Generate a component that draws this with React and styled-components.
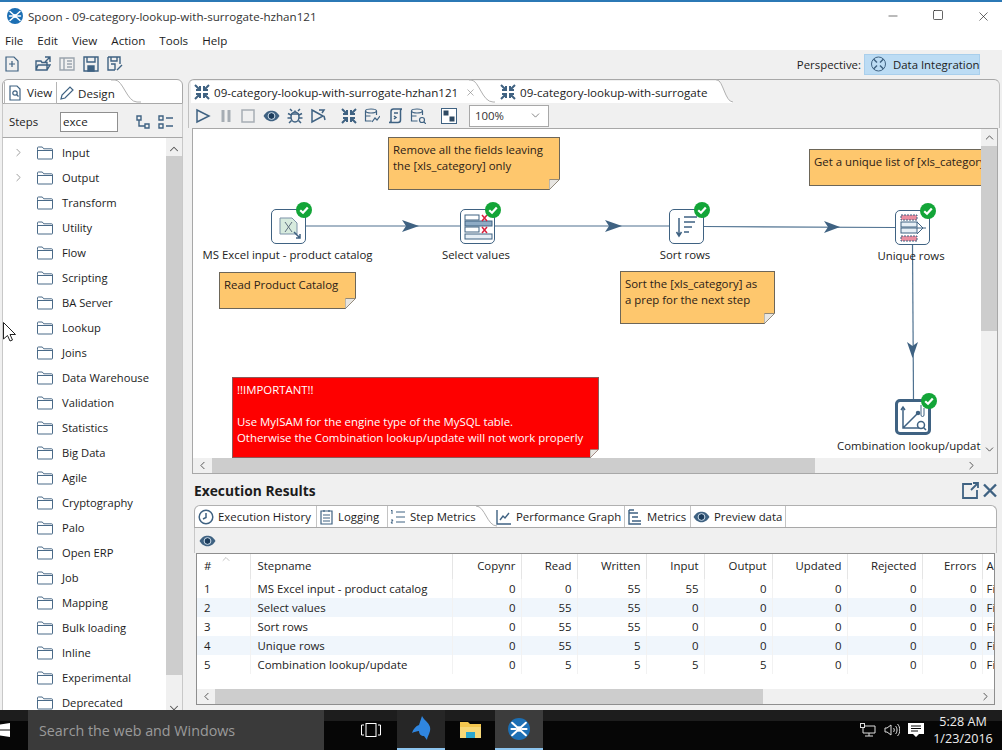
import React from "react";
import styled, { createGlobalStyle } from "styled-components";
import { ChevronRight, ChevronUp, ChevronDown, ChevronLeft, Minus, Square, X } from "lucide-react";

const SLATE = "#3f6282";

const GlobalStyle = createGlobalStyle`
  html, body { margin: 0; padding: 0; background: #f0f0f0; }
  * { box-sizing: border-box; }
  svg { flex: none; }
`;

const Frame = styled.div`
  width: 1002px;
  height: 750px;
  position: relative;
  overflow: hidden;
  display: flex;
  flex-direction: column;
  background: #f0f0f0;
  color: #1c1c1c;
  font-family: "Open Sans", "Noto Sans", sans-serif;
  font-size: 11.4px;
  white-space: nowrap;
`;

/* ---------- window chrome ---------- */

const TitleBar = styled.div`
  height: 32px;
  flex: none;
  display: flex;
  align-items: center;
  background: #fff;
  border-top: 2px solid #2b78b5;
  padding: 0 7px 2px 7px;
  gap: 5px;
`;

const TitleText = styled.div`
  flex: 1;
  font-size: 11.6px;
  color: #333;
`;

const WinButtons = styled.div`
  display: flex;
  gap: 21px;
  color: #111;
`;

const WinButton = styled.div`
  width: 24px;
  display: flex;
  justify-content: center;
`;

const MenuBar = styled.div`
  height: 18px;
  flex: none;
  display: flex;
  align-items: center;
  gap: 14px;
  padding: 0 0 2px 5px;
  background: #fff;
  font-size: 11.6px;
`;

const ToolBar = styled.div`
  height: 28px;
  flex: none;
  display: flex;
  align-items: center;
  padding: 0 22px 0 5px;
`;

const ToolIcons = styled.div`
  flex: 1;
  display: flex;
  align-items: center;
  gap: 8px;
`;

const LeadIcon = styled.span`
  display: flex;
  margin-right: 8px;
`;

const PerspectiveLabel = styled.span`
  margin-right: 3px;
`;

const PerspectiveButton = styled.div`
  width: 116px;
  height: 21px;
  display: flex;
  align-items: center;
  gap: 6px;
  padding-left: 5px;
  background: #bcdcf4;
  border: 1px solid #a9cfec;
`;

const Main = styled.div`
  flex: 1;
  min-height: 0;
  display: flex;
  gap: 5px;
  padding: 1px 2px 0 2px;
`;

/* ---------- left panel ---------- */

const SidePanel = styled.div`
  width: 181px;
  flex: none;
  display: flex;
  flex-direction: column;
  min-height: 0;
`;

const SideTabs = styled.div`
  height: 25px;
  flex: none;
  position: relative;
  display: flex;
  background: #fff;
  border: 1px solid #a8a8a8;
  border-radius: 6px 6px 0 0;
  padding: 2px 0 0 1px;
`;

const SideTab = styled.div`
  height: 22px;
  display: flex;
  align-items: center;
  gap: ${(p) => p.$gap || 3}px;
  padding-left: ${(p) => p.$pad || 3}px;
  width: ${(p) => p.$w}px;
  border-right: ${(p) => (p.$edge ? "1px solid #b5b5b5" : "none")};
  border-left: ${(p) => (p.$edge ? "1px solid #b5b5b5" : "none")};
  border-bottom: ${(p) => (p.$edge ? "1px solid #b5b5b5" : "none")};
  font-size: 11.6px;
`;

const TabCurve = styled.svg`
  position: absolute;
  left: ${(p) => p.$x}px;
  top: -1px;
`;

const StepsRow = styled.div`
  height: 34px;
  flex: none;
  display: flex;
  align-items: center;
  padding: 2px 0 0 6px;
  background: #f0f0f0;
  border-left: 1px solid #c8c8c8;
  border-right: 1px solid #c8c8c8;
  border-bottom: 1px solid #a8a8a8;
`;

const StepsLabel = styled.span`
  width: 51px;
`;

const SearchInput = styled.div`
  width: 58px;
  height: 20px;
  display: flex;
  align-items: center;
  padding-left: 2px;
  background: #fff;
  border: 1px solid #8f8f8f;
  font-size: 11.6px;
`;

const StepsIcons = styled.div`
  display: flex;
  gap: 7px;
  margin-left: 17px;
`;

const SideBody = styled.div`
  flex: 1;
  min-height: 0;
  overflow: hidden;
  display: flex;
  background: #fff;
  border-left: 1px solid #c8c8c8;
  border-right: 1px solid #c8c8c8;
`;

const FolderList = styled.div`
  flex: 1;
  padding-top: 2px;
`;

const FolderRow = styled.div`
  height: 25px;
  display: flex;
  align-items: center;
  font-size: 11.2px;
`;

const Expander = styled.div`
  width: 34px;
  padding-left: 9px;
  color: #808080;
  display: flex;
`;

const FolderName = styled.span`
  margin-left: 9px;
`;

const VScroll = styled.div`
  width: 16px;
  flex: none;
  height: ${(p) => (p.$height ? `${p.$height}px` : "auto")};
  display: flex;
  flex-direction: column;
  align-items: center;
  background: #f0f0f0;
  color: #555;
`;

const VThumb = styled.div`
  width: 100%;
  flex: ${(p) => p.$flex} 0 0;
  background: ${(p) => (p.$track ? "transparent" : "#cdcdcd")};
`;

const ScrollEnd = styled.div`
  height: ${(p) => p.$h || 17}px;
  flex: none;
  display: flex;
  align-items: ${(p) => (p.$low ? "flex-end" : "center")};
  justify-content: center;
`;

/* ---------- right panel ---------- */

const WorkArea = styled.div`
  flex: 1;
  min-width: 0;
  display: flex;
  flex-direction: column;
`;

const EditorTabs = styled.div`
  height: 24px;
  flex: none;
  position: relative;
  display: flex;
  padding: 1px 0 0 2px;
  border-top: 1px solid #a8a8a8;
  border-left: 1px solid #c0c0c0;
  border-right: 1px solid #c0c0c0;
  border-radius: 6px 6px 0 0;
`;

const EditorTab = styled.div`
  height: 22px;
  width: ${(p) => p.$w}px;
  flex: none;
  display: flex;
  align-items: center;
  gap: 4px;
  padding-left: ${(p) => p.$pad}px;
  background: #fff;
  font-size: 11.6px;
`;

const TabClose = styled.span`
  margin-left: 3px;
  display: flex;
  color: #888;
`;

const EditorToolBar = styled.div`
  height: 25px;
  flex: none;
  display: flex;
  align-items: center;
  padding-left: 6px;
  border-left: 1px solid #c0c0c0;
  border-right: 1px solid #c0c0c0;
`;

const ToolGroup = styled.div`
  display: flex;
  align-items: center;
  gap: 7px;
  margin-right: ${(p) => p.$after}px;
`;

const ZoomBox = styled.div`
  width: 80px;
  height: 22px;
  display: flex;
  align-items: center;
  justify-content: space-between;
  padding: 0 6px 0 5px;
  background: #fff;
  border: 1px solid #a8a8a8;
  color: #333;
`;

const CanvasFrame = styled.div`
  height: 346px;
  flex: none;
  display: flex;
  flex-direction: column;
  margin-left: 4px;
  margin-right: 2px;
  background: #fff;
  border: 1px solid #a8a8a8;
`;

const CanvasRow = styled.div`
  flex: 1;
  min-height: 0;
  display: flex;
`;

const Canvas = styled.div`
  flex: 1;
  min-width: 0;
  position: relative;
  overflow: hidden;
  background: #fff;
`;

const HopLayer = styled.svg`
  position: absolute;
  left: 0;
  top: 0;
`;

const Note = styled.div`
  position: absolute;
  left: ${(p) => p.$x}px;
  top: ${(p) => p.$y}px;
  width: ${(p) => p.$w}px;
  height: ${(p) => p.$h}px;
  padding: 4px 4px;
  line-height: 16px;
  white-space: pre;
  background: ${(p) => p.$bg || "#fec76d"};
  border: 1px solid ${(p) => p.$line || "#6d6658"};
  color: ${(p) => p.$fg || "#2b2117"};
`;

const NoteFold = styled.svg`
  position: absolute;
  right: -1px;
  bottom: -1px;
`;

const StepNode = styled.div`
  position: absolute;
  left: ${(p) => p.$x}px;
  top: ${(p) => p.$y}px;
  width: ${(p) => p.$size}px;
  height: ${(p) => p.$size}px;
  display: flex;
  align-items: center;
  justify-content: center;
  background: #fff;
  border: ${(p) => (p.$heavy ? `3px solid ${SLATE}` : `1px solid ${SLATE}`)};
  border-radius: 5px;
`;

const CheckBadge = styled.svg`
  position: absolute;
  right: ${(p) => (p.$heavy ? -10 : -8)}px;
  top: ${(p) => (p.$heavy ? -10 : -9)}px;
`;

const StepLabel = styled.div`
  position: absolute;
  left: ${(p) => p.$x}px;
  top: ${(p) => p.$y}px;
  white-space: nowrap;
  color: #222;
  transform: ${(p) => (p.$left ? "none" : "translateX(-50%)")};
`;

const HScroll = styled.div`
  height: 15px;
  flex: none;
  display: flex;
  align-items: center;
  background: #f0f0f0;
  color: #555;
`;

const HThumb = styled.div`
  height: 100%;
  width: ${(p) => p.$w}px;
  background: #cdcdcd;
  flex: none;
`;

const HEnd = styled.div`
  width: ${(p) => p.$w || 17}px;
  flex: none;
  display: flex;
  justify-content: center;
  margin-left: ${(p) => (p.$push ? "auto" : 0)};
`;

const Results = styled.div`
  flex: 1;
  min-height: 0;
  display: flex;
  flex-direction: column;
  padding: 0 2px 0 4px;
`;

const ResultsHead = styled.div`
  height: 31px;
  flex: none;
  display: flex;
  align-items: center;
  justify-content: space-between;
  padding-left: 2px;
  padding-top: 1px;
`;

const ResultsTitle = styled.div`
  font-weight: 700;
  font-size: 13.8px;
  color: #1c1c1c;
`;

const HeadIcons = styled.div`
  display: flex;
  gap: 4px;
  margin-right: 1px;
`;

const ResultTabs = styled.div`
  height: 23px;
  flex: none;
  position: relative;
  display: flex;
  align-items: flex-end;
  background: #fff;
  border: 1px solid #b0b0b0;
  border-bottom: 1px solid #a8a8a8;
  border-radius: 6px 6px 0 0;
  margin-left: 2px;
  margin-right: 1px;
  padding-left: 1px;
`;

const ResultTab = styled.div`
  height: 21px;
  width: ${(p) => p.$w}px;
  flex: none;
  display: flex;
  align-items: center;
  gap: 4px;
  padding-left: 2px;
  border-right: ${(p) => (p.$plain ? "none" : "1px solid #c4c4c4")};
`;

const TabGap = styled.span`
  width: 14px;
  flex: none;
`;

const ResultTools = styled.div`
  height: 25px;
  flex: none;
  display: flex;
  align-items: center;
  padding-left: 4px;
  margin-left: 2px;
  margin-right: 1px;
  border-left: 1px solid #c8c8c8;
  border-right: 1px solid #c8c8c8;
`;

const TableBox = styled.div`
  height: 152px;
  flex: none;
  position: relative;
  overflow: hidden;
  display: flex;
  flex-direction: column;
  margin-left: 4px;
  margin-right: 3px;
  background: #fff;
  border: 1px solid #8e8e8e;
`;

const TableClip = styled.div`
  flex: 1;
  min-height: 0;
  overflow: hidden;
`;

const MetricsTable = styled.table`
  border-collapse: collapse;
  table-layout: fixed;
  width: 811px;
`;

const HeadCell = styled.th`
  height: 25px;
  font-weight: 400;
  padding: 0 5px 3px ${(p) => (p.$tight ? 4 : 7)}px;
  text-align: ${(p) => (p.$text ? "left" : "right")};
  border-right: 1px solid #e5e5e5;
  color: #222;
  white-space: nowrap;
  overflow: hidden;
`;

const BodyRow = styled.tr`
  background: ${(p) => (p.$alt ? "#f0f6fc" : "#fff")};
`;

const BodyCell = styled.td`
  height: 19px;
  padding: 0 5px 0 ${(p) => (p.$tight ? 4 : 7)}px;
  text-align: ${(p) => (p.$text ? "left" : "right")};
  white-space: nowrap;
  overflow: hidden;
  border-right: 1px solid #f2f2f2;
  color: #222;
`;

const SortMark = styled.span`
  position: absolute;
  left: 23px;
  top: -1px;
  color: #888;
  display: flex;
`;

/* ---------- taskbar ---------- */

const TaskBar = styled.div`
  height: 40px;
  flex: none;
  display: flex;
  align-items: stretch;
  background: linear-gradient(#1d1d1d 0, #1d1d1d 11px, #060606 11px);
  color: #fff;
`;

const StartSlot = styled.div`
  width: 28px;
  flex: none;
  display: flex;
  align-items: center;
`;

const SearchBox = styled.div`
  width: 296px;
  flex: none;
  display: flex;
  align-items: center;
  padding-left: 11px;
  background: #3a3a3a;
  color: #9a9a9a;
  font-size: 14.3px;
`;

const TaskView = styled.div`
  width: 73px;
  flex: none;
  display: flex;
  align-items: center;
  justify-content: center;
  padding-left: 21px;
`;

const TaskApp = styled.div`
  width: ${(p) => p.$w}px;
  flex: none;
  display: flex;
  align-items: center;
  justify-content: center;
  background: ${(p) => p.$bg || "transparent"};
  border-bottom: ${(p) => (p.$open ? "2px solid #8cc4ee" : "none")};
`;

const Tray = styled.div`
  flex: 1;
  display: flex;
  align-items: center;
  justify-content: flex-end;
  gap: 8px;
  padding-right: 4px;
`;

const Clock = styled.div`
  width: 70px;
  margin-left: -4px;
  text-align: center;
  line-height: 17px;
  font-size: 12.6px;
  color: #eee;
`;

const MouseCursor = styled.svg`
  position: absolute;
  left: 3px;
  top: 322px;
`;

/* ---------- drawings ---------- */

const Ico = ({ w = 16, h = 16, box, children, color = SLATE, sw = 1.2 }) => (
  <svg width={w} height={h} viewBox={box || `0 0 ${w} ${h}`} fill="none" stroke={color} strokeWidth={sw}>
    {children}
  </svg>
);

const SpoonLogo = ({ size = 16 }) => (
  <svg width={size} height={size} viewBox="0 0 16 16">
    <circle cx="8" cy="8" r="8" fill="#1c6fb4" />
    <g stroke="#fff" strokeWidth="1.5" strokeLinecap="round">
      <path d="M3 3.5 13 12.5M3 12.5 13 3.5M2.5 8h3M10.5 8h3" />
    </g>
    <circle cx="8" cy="8" r="2" fill="#fff" />
  </svg>
);

const Folder = () => (
  <Ico w={16} h={14} color="#4a6a88" sw={1}>
    <path d="M.5 3.5V1.8c0-.5.3-.8.8-.8h4l1.4 1.8h8c.5 0 .8.3.8.8V12.5c0 .3-.2.5-.5.5H1c-.3 0-.5-.2-.5-.5Z" />
    <path d="M.5 4.5h15" />
  </Ico>
);

const ArrowsIn = ({ color = SLATE }) => (
  <Ico color={color} sw={2}>
    <path d="M1 1l5 5M6 2v4H2M15 1l-5 5M10 2v4h4M1 15l5-5M6 14v-4H2M15 15l-5-5M10 14v-4h4" />
  </Ico>
);

const Eye = () => (
  <svg width="17" height="12" viewBox="0 0 17 12">
    <path d="M.5 6C3 2 5.500.8 8.500.8S14 2 16.500 6c-2.500 4-5 5.200-8 5.200S3 10 .5 6Z" fill={SLATE} />
    <circle cx="8.500" cy="6" r="3.400" fill="#1c3c5c" stroke="#cfe0ee" strokeWidth="1" />
  </svg>
);

const Bug = () => (
  <Ico sw={1.500}>
    <ellipse cx="8" cy="9" rx="4" ry="5" />
    <path d="M8 2.500v2M5 3 3 1M11 3l2-2M4 7 1 5.500M12 7l3-1.500M4 10H.5M12 10h3.500M4.500 12.500 2 15M11.500 12.500 14 15M4 6h8" />
  </Ico>
);

const Scroll = () => (
  <Ico sw={1.500}>
    <path d="M4 14V3.500C4 2 5 1 6.500 1H15c-1 0-1.500 1-1.500 2v9c0 1.500-1 2.500-2.500 2.500H2c1 0 2-.5 2-.5Z" />
    <path d="M7 5h4M7 8l2 1.500L7 11" />
  </Ico>
);

const DbSheet = ({ mark }) => (
  <Ico>
    <ellipse cx="7" cy="3" rx="5.500" ry="2" />
    <path d="M1.500 3v10h6M12.500 3v4M1.500 8h5" />
    {mark}
  </Ico>
);

const CheckMark = ({ heavy }) => (
  <CheckBadge $heavy={heavy} width="18" height="18" viewBox="0 0 18 18">
    <circle cx="9" cy="9" r="8" fill="#13a538" />
    <path d="M5.200 9.200 8 11.800 12.800 6.400" fill="none" stroke="#fff" strokeWidth="2.200" />
  </CheckBadge>
);

const Fold = ({ size = 11, back = "#fff" }) => (
  <NoteFold width={size} height={size} viewBox="0 0 11 11">
    <path d="M11 0 0 11h11Z" fill={back} />
    <path d="M0 11V1.500C0 1 .5.500 1 .500H10.500L0 11Z" fill="#e8e6e2" stroke="#7a7468" strokeWidth=".8" />
  </NoteFold>
);

const ExcelStep = () => (
  <svg width="26" height="26" viewBox="0 0 26 26" fill="none">
    <path d="M4 4h12l5 5v11H4Z" fill="#d7ebde" stroke="#7d93a8" />
    <path d="M9 8l7 10M16 8l-7 10" stroke="#60707f" strokeWidth="1" />
    <path d="M18 18l6 6M24 20v4h-4" stroke={SLATE} strokeWidth="1.500" />
  </svg>
);

const SelectStep = () => (
  <svg width="32" height="32" viewBox="0 0 32 32" fill="none" stroke={SLATE}>
    <rect x="3" y="4" width="14" height="5" />
    <rect x="3" y="10" width="27" height="5" fill="#8eabc5" />
    <rect x="3" y="16" width="14" height="5" />
    <rect x="3" y="23" width="27" height="5" fill="#e6eef5" />
    <path d="M20 4l5 6M25 4l-5 6M20 16l5 6M25 16l-5 6" stroke="#d8203c" strokeWidth="1.500" />
  </svg>
);

const SortStep = () => (
  <svg width="24" height="24" viewBox="0 0 24 24" fill="none" stroke={SLATE} strokeWidth="1.500">
    <path d="M9 2h13M9 7h11M9 12h8M9 17h5" />
    <path d="M4 3v17M1.500 17 4 21l2.500-4" />
  </svg>
);

const UniqueStep = () => (
  <svg width="32" height="32" viewBox="0 0 32 32" fill="none" stroke={SLATE}>
    <rect x="4" y="3" width="16" height="5" fill="#ea8ea0" strokeDasharray="2 1" />
    <rect x="4" y="10" width="16" height="5" fill="#e8f0f6" />
    <rect x="4" y="16" width="16" height="5" fill="#e8f0f6" />
    <rect x="4" y="24" width="16" height="5" fill="#ea8ea0" strokeDasharray="2 1" />
    <path d="M20 10l6 6-6 6M20 16h9" />
  </svg>
);

const CombinationStep = () => (
  <svg width="30" height="30" viewBox="0 0 30 30" fill="none" stroke={SLATE} strokeWidth="1.500">
    <path d="M5 6v20h16M5 26 20 11" />
    <path d="M3 8l2-3 2 3" />
    <circle cx="20" cy="11" r="1.500" fill={SLATE} />
    <path d="M23 3v10a1.500 1.500 0 0 0 3 0V6" strokeWidth="1" />
    <circle cx="23" cy="23" r="3.500" />
    <path d="M25.500 25.500 28 28" />
  </svg>
);

/* ---------- data ---------- */

const folders = [
  "Input", "Output", "Transform", "Utility", "Flow", "Scripting", "BA Server", "Lookup",
  "Joins", "Data Warehouse", "Validation", "Statistics", "Big Data", "Agile", "Cryptography",
  "Palo", "Open ERP", "Job", "Mapping", "Bulk loading", "Inline", "Experimental", "Deprecated",
];

const columns = [
  { name: "#", width: 53, text: true },
  { name: "Stepname", width: 202, text: true },
  { name: "Copynr", width: 69 },
  { name: "Read", width: 56 },
  { name: "Written", width: 69 },
  { name: "Input", width: 58 },
  { name: "Output", width: 68 },
  { name: "Updated", width: 75 },
  { name: "Rejected", width: 75 },
  { name: "Errors", width: 60 },
  { name: "Active", width: 26, text: true, tight: true },
];

const rows = [
  ["1", "MS Excel input - product catalog", 0, 0, 55, 55, 0, 0, 0, 0, "Finished"],
  ["2", "Select values", 0, 55, 55, 0, 0, 0, 0, 0, "Finished"],
  ["3", "Sort rows", 0, 55, 55, 0, 0, 0, 0, 0, "Finished"],
  ["4", "Unique rows", 0, 55, 5, 0, 0, 0, 0, 0, "Finished"],
  ["5", "Combination lookup/update", 0, 5, 5, 5, 5, 0, 0, 0, "Finished"],
];

// canvas coordinates are relative to the top-left of the graph area
const OX = 193;
const OY = 129;

const hops = [
  { d: "M305 226H460", arrow: "M402 220 419 226 402 232 406 226Z" },
  { d: "M494 226H669", arrow: "M605 220 622 226 605 232 609 226Z" },
  { d: "M703 226.500 895 227.500", arrow: "M824 221 840 227 824 233 828 227Z" },
  { d: "M912.500 244 913.500 399", arrow: "M907 342 912.500 358 918 342 912.500 346Z" },
];

const App = () => (
  <Frame>
    <GlobalStyle />

    <TitleBar>
      <SpoonLogo />
      <TitleText>Spoon - 09-category-lookup-with-surrogate-hzhan121</TitleText>
      <WinButtons>
        <WinButton><Minus size={14} strokeWidth={1} /></WinButton>
        <WinButton><Square size={12} strokeWidth={1.300} /></WinButton>
        <WinButton><X size={15} strokeWidth={1} /></WinButton>
      </WinButtons>
    </TitleBar>

    <MenuBar>
      {["File", "Edit", "View", "Action", "Tools", "Help"].map((m) => (
        <span key={m}>{m}</span>
      ))}
    </MenuBar>

    <ToolBar>
      <ToolIcons>
        <LeadIcon>
          <Ico w={14} h={16}>
            <path d="M1 1h8l4 4v10H1ZM4 8h6M7 5v6" />
          </Ico>
        </LeadIcon>
        <Ico sw={1.400}>
          <path d="M1 14V5h5l1 1.500h5V14ZM1 14l2-5h12l-3 5M10 1h5v5M15 1l-5 5" />
        </Ico>
        <Ico color="#9aa4ad" sw={1.400}>
          <path d="M1 2h14v12H1ZM5 2v12M8 5h5M8 8h5M8 11h5" />
        </Ico>
        <Ico sw={1.400}>
          <path d="M1 1h14v14H1Z" />
          <path d="M4 1v5h8V1" />
          <path d="M5 10h6v5H5Z" fill={SLATE} />
        </Ico>
        <Ico sw={1.400}>
          <path d="M1 1h12v7M8 14H1V1M4 1v4h6V1M4 8h4v6M10 14l5-5" />
        </Ico>
      </ToolIcons>
      <PerspectiveLabel>Perspective:</PerspectiveLabel>
      <PerspectiveButton>
        <svg width="17" height="16" viewBox="0 0 16 16" fill="none" stroke={SLATE} strokeWidth="1.500">
          <circle cx="8" cy="8" r="7" strokeWidth="1" />
          <path d="M3 3l3.500 3.500M13 3 9.500 6.500M3 13l3.500-3.500M13 13 9.500 9.500" />
        </svg>
        <span>Data Integration</span>
      </PerspectiveButton>
    </ToolBar>

    <Main>
      <SidePanel>
        <SideTabs>
          <SideTab $w={53} $gap={5} $edge>
            <Ico w={14} h={16}>
              <path d="M2 1h7l3 3v11H2Z" />
              <circle cx="7" cy="8" r="2.200" />
              <path d="M8.500 9.500 10.500 11.500" />
            </Ico>
            View
          </SideTab>
          <SideTab $w={64} $pad={2}>
            <Ico>
              <path d="M2 14l1-4 8-8 3 3-8 8Z" />
            </Ico>
            Design
          </SideTab>
          <TabCurve $x={108} width="30" height="25" viewBox="0 0 30 25" fill="none">
            <path d="M0 1H4C12 1 16 23 26 23H30" stroke="#b0b0b0" />
          </TabCurve>
        </SideTabs>
        <StepsRow>
          <StepsLabel>Steps</StepsLabel>
          <SearchInput>exce</SearchInput>
          <StepsIcons>
            <Ico sw={1.400}>
              <path d="M2 2h4v4H2ZM10 10h4v4h-4ZM4 6v6h6" />
            </Ico>
            <Ico sw={1.400}>
              <path d="M1 2h4v4H1ZM1 10h4v4H1ZM8 4h7M8 12h7" />
            </Ico>
          </StepsIcons>
        </StepsRow>
        <SideBody>
          <FolderList>
            {folders.map((name, i) => (
              <FolderRow key={name}>
                <Expander>{i < 2 && <ChevronRight size={13} strokeWidth={1.400} />}</Expander>
                <Folder />
                <FolderName>{name}</FolderName>
              </FolderRow>
            ))}
          </FolderList>
          <VScroll $height={578}>
            <ScrollEnd $h={18} $low><ChevronUp size={14} strokeWidth={1.800} /></ScrollEnd>
            <VThumb $flex={518} />
            <VThumb $flex={24} $track />
            <ScrollEnd><ChevronDown size={14} strokeWidth={1.800} /></ScrollEnd>
          </VScroll>
        </SideBody>
      </SidePanel>

      <WorkArea>
        <EditorTabs>
          <EditorTab $w={290} $pad={3}>
            <ArrowsIn />
            <span>09-category-lookup-with-surrogate-hzhan121</span>
            <TabClose><X size={11} strokeWidth={1.400} /></TabClose>
          </EditorTab>
          <EditorTab $w={235} $pad={19}>
            <ArrowsIn />
            <span>09-category-lookup-with-surrogate</span>
          </EditorTab>
          <TabCurve $x={280} width="26" height="24" viewBox="0 0 26 24" fill="none">
            <path d="M0 1H2C10 1 13 23 24 23H26" stroke="#b0b0b0" />
          </TabCurve>
          <TabCurve $x={527} width="18" height="24" viewBox="0 0 18 24" fill="none">
            <path d="M0 1H1C7 1 9 23 17 23V24H0Z" fill="#fff" />
            <path d="M0 1H1C7 1 9 23 17 23" stroke="#b0b0b0" />
          </TabCurve>
        </EditorTabs>

        <EditorToolBar>
          <ToolGroup $after={15}>
            <Ico><path d="M2 2 14 8 2 14Z" strokeWidth="1.500" /></Ico>
            <Ico w={15} color="#a6adb4" sw={3}><path d="M5 2v12M11 2v12" /></Ico>
            <Ico color="#a6adb4" sw={1.500}><path d="M2 2h12v12H2Z" /></Ico>
            <Eye />
            <Bug />
            <Ico sw={1.500}><path d="M2 2 13 8 2 14ZM9 2h5l-2 3M14 8l1 4" /></Ico>
          </ToolGroup>
          <ToolGroup $after={15}>
            <ArrowsIn />
            <DbSheet mark={<path d="M8 14l3-4 2 2 3-4" />} />
            <Scroll />
            <DbSheet mark={<><circle cx="12" cy="12" r="2.500" /><path d="M14 14l2 2" /></>} />
          </ToolGroup>
          <ToolGroup $after={12}>
            <svg width="16" height="16" viewBox="0 0 16 16">
              <rect x=".5" y=".5" width="15" height="15" fill="#fff" stroke={SLATE} />
              <rect x="2.500" y="2.500" width="5" height="5" fill="#2f4a63" />
              <rect x="8.500" y="8.500" width="5" height="5" fill="#2f4a63" />
            </svg>
          </ToolGroup>
          <ZoomBox>
            <span>100%</span>
            <ChevronDown size={13} strokeWidth={1.300} color="#555" />
          </ZoomBox>
        </EditorToolBar>

        <CanvasFrame>
          <CanvasRow>
            <Canvas>
              <HopLayer width="790" height="330" viewBox={`${OX} ${OY} 790 330`} fill="none">
                {hops.map((h) => (
                  <g key={h.d}>
                    <path d={h.d} stroke="#4e7190" strokeWidth="1.200" />
                    <path d={h.arrow} fill={SLATE} />
                  </g>
                ))}
              </HopLayer>

              <Note $x={388 - OX} $y={137 - OY} $w={172} $h={53}>
                {"Remove all the fields leaving\nthe [xls_category] only"}
                <Fold />
              </Note>
              <Note $x={219 - OX} $y={272 - OY} $w={137} $h={37}>
                Read Product Catalog
                <Fold />
              </Note>
              <Note $x={620 - OX} $y={271 - OY} $w={155} $h={53}>
                {"Sort the [xls_category] as\na prep for the next step"}
                <Fold />
              </Note>
              <Note $x={809 - OX} $y={149 - OY} $w={240} $h={37}>
                Get a unique list of [xls_category]
              </Note>
              <Note $x={232 - OX} $y={377 - OY} $w={367} $h={81} $bg="#fe0000" $line="#8c5a5a" $fg="#fff">
                {"!!IMPORTANT!!\n\nUse MyISAM for the engine type of the MySQL table.\nOtherwise the Combination lookup/update will not work properly"}
                <Fold size={9} />
              </Note>

              <StepNode $x={271 - OX} $y={209 - OY} $size={35}><ExcelStep /><CheckMark /></StepNode>
              <StepNode $x={460 - OX} $y={209 - OY} $size={35}><SelectStep /><CheckMark /></StepNode>
              <StepNode $x={669 - OX} $y={209 - OY} $size={35}><SortStep /><CheckMark /></StepNode>
              <StepNode $x={895 - OX} $y={210 - OY} $size={35}><UniqueStep /><CheckMark /></StepNode>
              <StepNode $x={895 - OX} $y={399 - OY} $size={36} $heavy><CombinationStep /><CheckMark heavy /></StepNode>

              <StepLabel $x={287.500 - OX} $y={247 - OY}>MS Excel input - product catalog</StepLabel>
              <StepLabel $x={476 - OX} $y={247 - OY}>Select values</StepLabel>
              <StepLabel $x={685 - OX} $y={247 - OY}>Sort rows</StepLabel>
              <StepLabel $x={911 - OX} $y={248 - OY}>Unique rows</StepLabel>
              <StepLabel $x={837 - OX} $y={438 - OY} $left>Combination lookup/update</StepLabel>
            </Canvas>
            <VScroll>
              <ScrollEnd><ChevronUp size={13} strokeWidth={1.800} /></ScrollEnd>
              <VThumb $flex={186} />
              <VThumb $flex={110} $track />
              <ScrollEnd><ChevronDown size={13} strokeWidth={1.800} /></ScrollEnd>
            </VScroll>
          </CanvasRow>
          <HScroll>
            <HEnd $w={19}><ChevronLeft size={13} strokeWidth={1.800} /></HEnd>
            <HThumb $w={603} />
            <HEnd $push><ChevronRight size={13} strokeWidth={1.800} /></HEnd>
            <HEnd $w={17} />
          </HScroll>
        </CanvasFrame>

        <Results>
          <ResultsHead>
            <ResultsTitle>Execution Results</ResultsTitle>
            <HeadIcons>
              <Ico w={17} h={17} sw={1.800}>
                <path d="M10 2H1v14h14V8M9 8l7-7M11 1h5v5" />
              </Ico>
              <Ico w={14} h={17} sw={2.400}>
                <path d="M1 2.500 13 14.500M13 2.500 1 14.500" />
              </Ico>
            </HeadIcons>
          </ResultsHead>

          <ResultTabs>
            <ResultTab $w={121}>
              <Ico sw={1.500}><circle cx="8" cy="8" r="6.800" /><path d="M8 4v4.500L5 10" /></Ico>
              Execution History
            </ResultTab>
            <ResultTab $w={71}>
              <Ico w={15}><path d="M2 2h11v13H2ZM5 1v2M10 1v2M4 6h7M4 9h7M4 12h7" /></Ico>
              Logging
            </ResultTab>
            <ResultTab $w={92} $plain>
              <Ico sw={1}><path d="M6 3h9M6 8h9M6 13h9M1 2l1-1v4M1 11h2l-2 3h2" /></Ico>
              Step Metrics
            </ResultTab>
            <TabCurve $x={281} width="22" height="22" viewBox="0 0 22 22" fill="none">
              <path d="M0 1C9 1 11 21 21 21" stroke="#b0b0b0" />
            </TabCurve>
            <TabGap />
            <ResultTab $w={131}>
              <Ico sw={1.400}><path d="M1 1v14h14M4 11l3-4 2 2 4-5" /></Ico>
              Performance Graph
            </ResultTab>
            <ResultTab $w={66}>
              <Ico sw={1.400}><path d="M2 1v14h12M2 4h9M5 8h6M5 12h9M2 1h5" /></Ico>
              Metrics
            </ResultTab>
            <ResultTab $w={95}>
              <Eye />
              Preview data
            </ResultTab>
          </ResultTabs>

          <ResultTools>
            <Eye />
          </ResultTools>

          <TableBox>
            <SortMark><ChevronUp size={12} strokeWidth={1} /></SortMark>
            <TableClip>
              <MetricsTable>
                <colgroup>
                  {columns.map((c) => (
                    <col key={c.name} width={c.width} />
                  ))}
                </colgroup>
                <thead>
                  <tr>
                    {columns.map((c) => (
                      <HeadCell key={c.name} $text={c.text} $tight={c.tight}>{c.name}</HeadCell>
                    ))}
                  </tr>
                </thead>
                <tbody>
                  {rows.map((r, i) => (
                    <BodyRow key={r[0]} $alt={i % 2 === 1}>
                      {r.map((v, j) => (
                        <BodyCell key={columns[j].name} $text={columns[j].text} $tight={columns[j].tight}>{v}</BodyCell>
                      ))}
                    </BodyRow>
                  ))}
                </tbody>
              </MetricsTable>
            </TableClip>
            <HScroll>
              <HEnd $w={18}><ChevronLeft size={13} strokeWidth={1.800} /></HEnd>
              <HThumb $w={548} />
              <HEnd $push><ChevronRight size={13} strokeWidth={1.800} /></HEnd>
            </HScroll>
          </TableBox>
        </Results>
      </WorkArea>
    </Main>

    <TaskBar>
      <StartSlot>
        <svg width="11" height="14" viewBox="0 0 11 14" fill="#fff">
          <path d="M0 1.500 10 0v6.500H0ZM0 7.500h10V14L0 12.500Z" />
        </svg>
      </StartSlot>
      <SearchBox>Search the web and Windows</SearchBox>
      <TaskView>
        <svg width="20" height="14" viewBox="0 0 20 14" fill="none" stroke="#fff">
          <rect x="5" y=".5" width="10" height="13" />
          <path d="M3 2H.5v10H3M17 2h2.500v10H17" />
        </svg>
      </TaskView>
      <TaskApp $w={48} $bg="#262626" $open>
        <svg width="20" height="26" viewBox="0 0 20 26">
          <path d="M11 0c1 2 2 3 4 5 3 3 5 6 4 10-1 4-3 6-3 9l-3-4c-3 0-5-2-5-5-2 0-5 1-7 2 1-4 4-7 7-8 1-3 2-6 3-9Z" fill="#2f86e0" />
        </svg>
      </TaskApp>
      <TaskApp $w={50}>
        <svg width="21" height="18" viewBox="0 0 21 18">
          <path d="M0 1h8l2 2h11v14H0Z" fill="#f3c64e" />
          <path d="M0 6h21v11H0Z" fill="#f7d877" />
          <path d="M6 11h9v6H6Z" fill="#2aa7cf" />
        </svg>
      </TaskApp>
      <TaskApp $w={48} $bg="#3c3c3c" $open>
        <SpoonLogo size={22} />
      </TaskApp>
      <Tray>
        <svg width="16" height="14" viewBox="0 0 16 14" fill="none" stroke="#ddd">
          <path d="M3 3h12v7H3ZM9 10v3M5 13h8" />
          <rect x=".5" y=".5" width="4" height="4" fill="#060606" />
        </svg>
        <svg width="16" height="14" viewBox="0 0 16 14" fill="none" stroke="#ddd">
          <path d="M1 5h2l4-3v10L3 9H1ZM9.500 5c1 1 1 3 0 4M11.500 3c2 2 2 6 0 8M13.500 1c3 3 3 9 0 12" />
        </svg>
        <svg width="16" height="16" viewBox="0 0 16 16">
          <path d="M0 1h16v11h-5l-3 3-3-3H0Z" fill="#fff" />
          <path d="M3 4h10M3 6.500h10M3 9h7" stroke="#060606" />
        </svg>
        <Clock>
          5:28 AM
          <br />
          1/23/2016
        </Clock>
      </Tray>
    </TaskBar>

    <MouseCursor width="13" height="20" viewBox="0 0 13 20">
      <path d="M.5.500V17l4-3.500L7 19l2.500-1-2.500-5.500H12.500Z" fill="#fff" stroke="#222" />
    </MouseCursor>
  </Frame>
);

export default App;
